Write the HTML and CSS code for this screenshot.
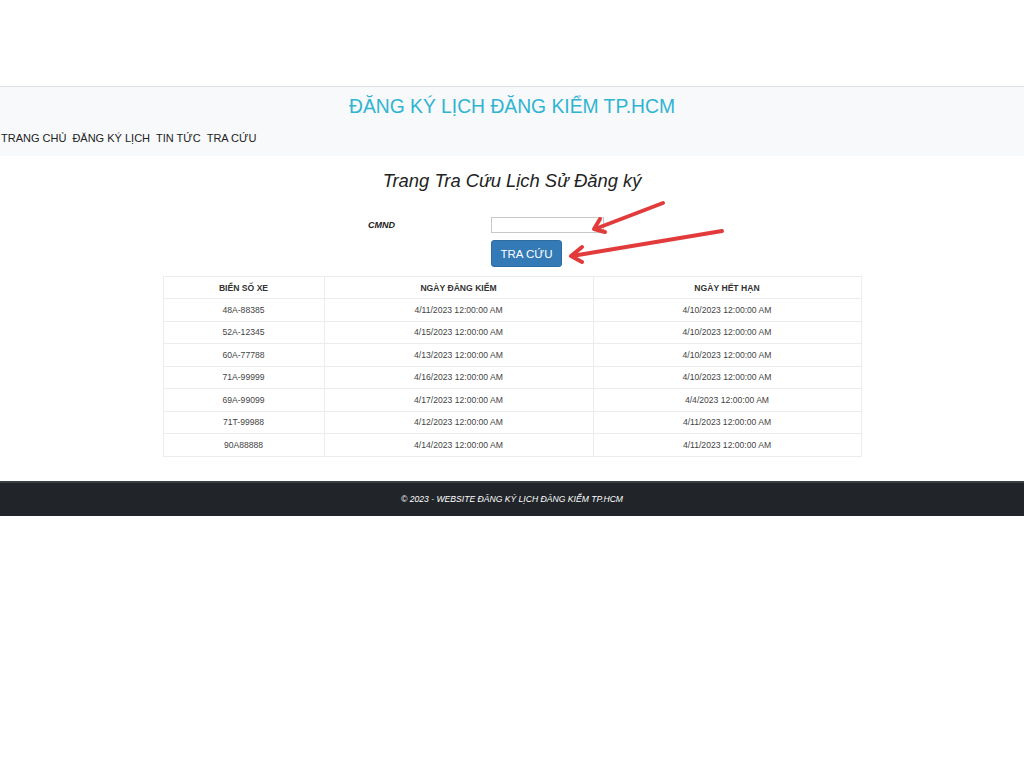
FILE: index.html
```html
<!DOCTYPE html>
<html lang="vi">
<head>
<meta charset="utf-8">
<title>Tra cứu</title>
<link rel="stylesheet" href="styles.css">
</head>
<body>
<div class="top-space"></div>
<header class="site-header">
  <h1 class="brand">ĐĂNG KÝ LỊCH ĐĂNG KIỂM TP.HCM</h1>
  <nav class="nav">
    <a href="#">TRANG CHỦ</a>
    <a href="#">ĐĂNG KÝ LỊCH</a>
    <a href="#">TIN TỨC</a>
    <a href="#">TRA CỨU</a>
  </nav>
</header>
<main class="content">
  <h2 class="page-title">Trang Tra Cứu Lịch Sử Đăng ký</h2>
  <form class="search">
    <div class="row">
      <label class="label">CMND</label>
      <input class="input" type="text">
    </div>
    <div class="row">
      <span class="label"></span>
      <button class="btn" type="button">TRA CỨU</button>
    </div>
  </form>
  <svg class="arrows" width="1024" height="80" viewBox="0 195 1024 80">
    <g stroke="#e23b3b" stroke-width="4" stroke-linecap="round" stroke-linejoin="round" fill="none">
      <line x1="663" y1="203" x2="595" y2="229"/>
      <polyline points="600,219 594,229 605,232"/>
      <line x1="722" y1="231" x2="572" y2="256"/>
      <polyline points="582,247 571,256 582,262"/>
    </g>
  </svg>
  <table class="grid">
    <thead>
      <tr><th>BIỂN SỐ XE</th><th>NGÀY ĐĂNG KIỂM</th><th>NGÀY HẾT HẠN</th></tr>
    </thead>
    <tbody>
      <tr><td>48A-88385</td><td>4/11/2023 12:00:00 AM</td><td>4/10/2023 12:00:00 AM</td></tr>
      <tr><td>52A-12345</td><td>4/15/2023 12:00:00 AM</td><td>4/10/2023 12:00:00 AM</td></tr>
      <tr><td>60A-77788</td><td>4/13/2023 12:00:00 AM</td><td>4/10/2023 12:00:00 AM</td></tr>
      <tr><td>71A-99999</td><td>4/16/2023 12:00:00 AM</td><td>4/10/2023 12:00:00 AM</td></tr>
      <tr><td>69A-99099</td><td>4/17/2023 12:00:00 AM</td><td>4/4/2023 12:00:00 AM</td></tr>
      <tr><td>71T-99988</td><td>4/12/2023 12:00:00 AM</td><td>4/11/2023 12:00:00 AM</td></tr>
      <tr><td>90A88888</td><td>4/14/2023 12:00:00 AM</td><td>4/11/2023 12:00:00 AM</td></tr>
    </tbody>
  </table>
</main>
<footer class="footer">© 2023 - WEBSITE ĐĂNG KÝ LỊCH ĐĂNG KIỂM TP.HCM</footer>
</body>
</html>
```

FILE: styles.css
```css
html, body {
  margin: 0;
  padding: 0;
  background: #fff;
  font-family: "Liberation Sans", Arial, sans-serif;
  color: #222;
}
.top-space {
  height: 86px;
  border-bottom: 1px solid #dfe2e5;
}
.site-header {
  background: #f8f9fa;
  height: 69px;
  display: flex;
  flex-direction: column;
}
.brand {
  margin: 0;
  padding-top: 8px;
  text-align: center;
  font-weight: normal;
  font-size: 19.3px;
  line-height: 24px;
  color: #2fb4d2;
}
.nav {
  display: flex;
  gap: 6px;
  padding-left: 1px;
  margin-top: 12px;
  font-size: 11px;
  line-height: 14px;
}
.nav a {
  color: #222;
  text-decoration: none;
}
.content {
  position: relative;
  display: flex;
  flex-direction: column;
  align-items: center;
  padding-bottom: 24px;
}
.page-title {
  margin: 13px 0 0;
  font-size: 18.4px;
  line-height: 24px;
  font-style: italic;
  font-weight: normal;
  color: #222;
}
.search {
  margin-top: 24px;
  display: flex;
  flex-direction: column;
  gap: 7px;
  width: 288px;
}
.row {
  display: flex;
  align-items: center;
}
.label {
  width: 123px;
  font-size: 9px;
  font-weight: bold;
  font-style: italic;
}
.input {
  width: 113px;
  height: 16px;
  box-sizing: border-box;
  border: 1px solid #c8c8c8;
  margin: 0;
  padding: 0;
}
.btn {
  width: 71px;
  height: 27px;
  background: #337ab7;
  color: #fff;
  border: 1px solid #2e6da4;
  border-radius: 3px;
  font-family: "Liberation Sans", Arial, sans-serif;
  font-size: 11.5px;
  padding: 0;
}
.arrows {
  position: absolute;
  left: 0;
  top: 39px;
  pointer-events: none;
}
.grid {
  margin-top: 9px;
  width: 699px;
  border-collapse: collapse;
  border: 1px solid #e3e3e3;
  font-size: 8.6px;
  color: #444;
}
.grid th, .grid td {
  border: 1px solid #ececec;
  height: 21.5px;
  padding: 0;
  text-align: center;
}
.grid th {
  font-weight: bold;
  color: #333;
  height: 21px;
}
.grid th:nth-child(1) { width: 160px; }
.grid th:nth-child(2) { width: 268px; }
.footer {
  background: #212529;
  color: #fff;
  border-top: 2px solid #3b3f44;
  height: 33px;
  display: flex;
  align-items: center;
  justify-content: center;
  font-size: 8.6px;
  font-style: italic;
}
```
